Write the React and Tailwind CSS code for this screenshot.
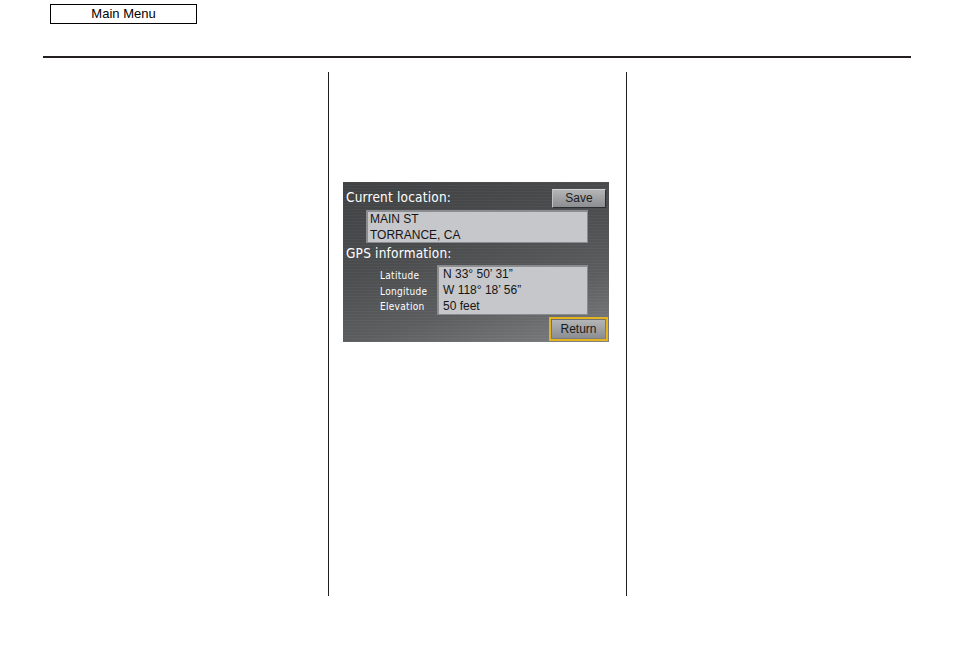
const screenFont = { fontFamily: '"DejaVu Sans Condensed", "DejaVu Sans", sans-serif' };

const Field = ({ className, children }) => (
  <div
    className={`border border-[#8a8b8e] bg-[#c6c7cb] text-[12px] leading-[16px] text-[#151515] shadow-[inset_1px_1px_0_#8d8e92] ${className}`}
    style={{ fontFamily: '"Liberation Sans", Arial, sans-serif' }}
  >
    {children}
  </div>
);

const Button = ({ label, className }) => (
  <div
    className={`flex items-center justify-center bg-[linear-gradient(180deg,#b4b5b7,#8c8d90)] text-[12px] text-[#1c1c1c] ${className}`}
    style={{ fontFamily: '"Liberation Sans", Arial, sans-serif' }}
  >
    {label}
  </div>
);

const NavScreen = () => (
  <div
    className="flex h-[160px] w-[266px] flex-col bg-[repeating-linear-gradient(0deg,rgba(255,255,255,0.035)_0px,rgba(255,255,255,0.035)_1px,transparent_1px,transparent_3px),linear-gradient(165deg,#3f4143_0%,#4a4c4e_40%,#5b5d5f_70%,#7e8082_100%)] px-[3px] pt-[6px]"
    style={screenFont}
  >
    <div className="flex h-[20px] items-center justify-between">
      <span className="text-[13.5px] leading-none tracking-[0.2px] text-white">Current location:</span>
      <Button label="Save" className="h-[19px] w-[54px] border border-[#2c2d2f] border-t-[#d0d1d3] border-l-[#c0c1c3]" />
    </div>
    <Field className="ml-[20px] mt-[2px] h-[33px] w-[222px] pl-[3px]">
      <div>MAIN ST</div>
      <div>TORRANCE, CA</div>
    </Field>
    <div className="flex h-[22px] items-center text-[13.5px] leading-none tracking-[0.2px] text-white">GPS information:</div>
    <div className="flex">
      <div className="ml-[34px] w-[57px] pt-[3px] text-[10px] leading-[15.5px] tracking-[0.3px] text-white">
        <div>Latitude</div>
        <div>Longitude</div>
        <div>Elevation</div>
      </div>
      <Field className="h-[50px] w-[151px] pl-[5px]">
        <div>N 33° 50’ 31”</div>
        <div>W 118° 18’ 56”</div>
        <div>50 feet</div>
      </Field>
    </div>
    <div className="mt-[2px] flex justify-end">
      <div className="-mr-[2px] h-[24px] w-[59px] border-2 border-[#e3b420] p-[1px]">
        <Button label="Return" className="h-full w-full" />
      </div>
    </div>
  </div>
);

export default function App() {
  return (
    <div className="min-h-[652px] w-[954px] bg-white" style={{ fontFamily: '"Liberation Sans", Arial, sans-serif' }}>
      <div className="pt-[4px]">
        <div className="ml-[50px] flex h-[20px] w-[147px] items-center justify-center border border-black text-[13px] text-black">
          Main Menu
        </div>
      </div>
      <div className="ml-[43px] mt-[32px] h-[2px] w-[868px] bg-[#231f20]" />
      <div className="mt-[14px] flex pl-[328px]">
        <div className="h-[524px] w-[299px] border-x border-[#231f20] pl-[14px] pt-[110px]">
          <NavScreen />
        </div>
      </div>
    </div>
  );
}
